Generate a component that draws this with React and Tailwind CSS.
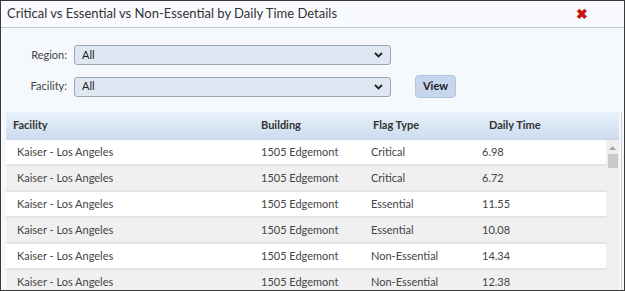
const rows = [
  ['Kaiser - Los Angeles', '1505 Edgemont', 'Critical', '6.98'],
  ['Kaiser - Los Angeles', '1505 Edgemont', 'Critical', '6.72'],
  ['Kaiser - Los Angeles', '1505 Edgemont', 'Essential', '11.55'],
  ['Kaiser - Los Angeles', '1505 Edgemont', 'Essential', '10.08'],
  ['Kaiser - Los Angeles', '1505 Edgemont', 'Non-Essential', '14.34'],
  ['Kaiser - Los Angeles', '1505 Edgemont', 'Non-Essential', '12.38'],
];

const Chevron = () => (
  <svg width="9" height="6" viewBox="0 0 9 6" className="shrink-0">
    <path d="M1 1 L4.5 4.5 L8 1" fill="none" stroke="#222" strokeWidth="1.8" />
  </svg>
);

const SelectBox = ({ label }) => (
  <div className="flex items-center h-[20px]">
    <span className="w-[73px] pr-[7px] text-right text-[11px] text-[#444]">{label}</span>
    <div className="flex items-center justify-between w-[317px] h-[20px] px-[7px] bg-[#dfe7f3] border border-[#9aa6b6] rounded-[3px] text-[11px] text-[#222]">
      <span>All</span>
      <Chevron />
    </div>
  </div>
);

export default function App() {
  return (
    <div
      className="w-[625px] h-[291px] overflow-hidden border border-[#3a3a3a] bg-[#f5f8fc] flex flex-col"
      style={{ fontFamily: 'Lato, "Open Sans", sans-serif' }}
    >
      <div className="h-[27px] shrink-0 flex items-center justify-between pl-[6px] pr-[36px] bg-[#f8fafd] border-b border-[#b7c7dc]">
        <span className="text-[13px] text-[#333]">Critical vs Essential vs Non-Essential by Daily Time Details</span>
        <span className="text-[#c81414] text-[14px] leading-none font-bold">✖</span>
      </div>

      <div className="pt-[17px] flex flex-col gap-[10px]">
        <SelectBox label="Region:" />
        <div className="flex items-center">
          <SelectBox label="Facility:" />
          <button className="ml-[24px] w-[41px] h-[23px] rounded-[4px] bg-[#c6d6ec] border border-[#b3c5de] text-[11px] font-bold text-[#222]">
            View
          </button>
        </div>
      </div>

      <div className="mt-[14px] ml-[5px] w-[616px] border-r border-[#cfcfcf] flex-1 flex flex-col">
        <div className="h-[28px] flex items-center w-[613px] bg-gradient-to-b from-[#e9f1fa] to-[#cddcef] border-b border-[#c9d6e6] text-[11px] font-bold text-[#333]">
          <span className="w-[255px] pl-[7px]">Facility</span>
          <span className="w-[112px]">Building</span>
          <span className="w-[116px]">Flag Type</span>
          <span>Daily Time</span>
        </div>
        <div className="flex flex-1">
          <div className="w-[600px] flex flex-col">
            {rows.map((r, i) => (
              <div
                key={i}
                className={`h-[26px] shrink-0 flex items-center border-b-2 border-[#e3e3e3] text-[11px] text-[#444] ${i % 2 === 0 ? 'bg-white' : 'bg-[#f0f0f0]'}`}
              >
                <span className="w-[255px] pl-[11px]">{r[0]}</span>
                <span className="w-[110px]">{r[1]}</span>
                <span className="w-[111px]">{r[2]}</span>
                <span>{r[3]}</span>
              </div>
            ))}
          </div>
          <div className="w-[13px] bg-[#efefef] flex flex-col items-center pt-[6px]">
            <svg width="7" height="4" viewBox="0 0 7 4">
              <path d="M0 4 L3.5 0 L7 4 Z" fill="#a8a8a8" />
            </svg>
            <div className="mt-[4px] w-[10px] h-[14px] bg-[#c9c9c9]" />
          </div>
        </div>
      </div>
    </div>
  );
}
